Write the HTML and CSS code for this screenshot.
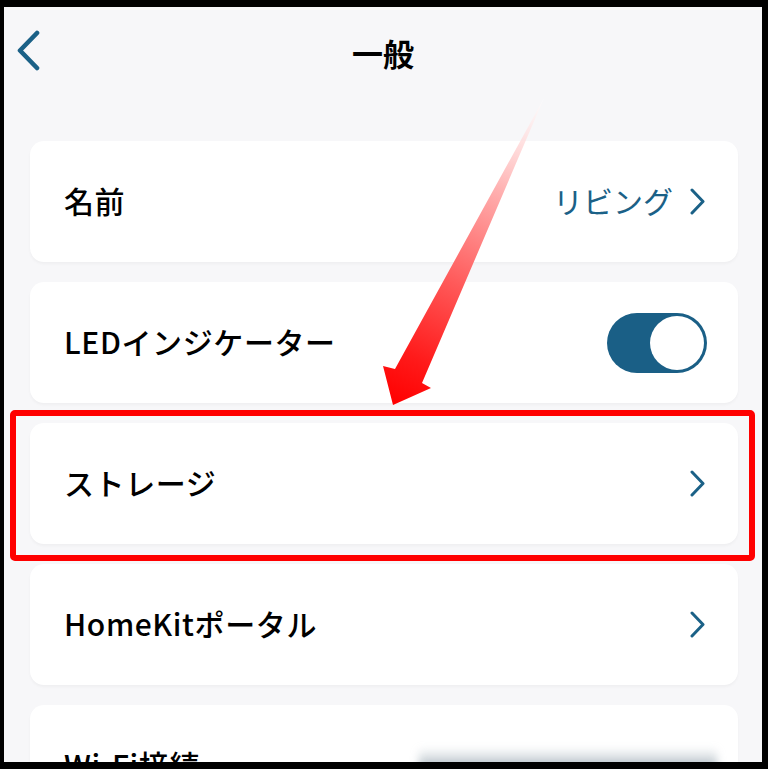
FILE: index.html
```html
<!DOCTYPE html>
<html lang="ja">
<head>
<meta charset="utf-8">
<title>一般</title>
<link rel="stylesheet" href="styles.css">
</head>
<body>
<div class="frame">
  <div class="screen">
    <header class="header">
      <svg class="back" width="26" height="41" viewBox="0 0 26 41">
        <polyline points="21,3 4,20.5 21,38" fill="none" stroke="#1b6187" stroke-width="4.6" stroke-linecap="round" stroke-linejoin="round"/>
      </svg>
      <h1 class="title">一般</h1>
    </header>
    <main class="list">
      <div class="card">
        <span class="label">名前</span>
        <span class="value">リビング</span>
        <svg class="chev" width="17" height="27" viewBox="0 0 17 27"><polyline points="3,2 14,13.5 3,25" fill="none" stroke="#1b6187" stroke-width="3" stroke-linecap="round" stroke-linejoin="round"/></svg>
      </div>
      <div class="card">
        <span class="label">LEDインジケーター</span>
        <div class="toggle"><div class="knob"></div></div>
      </div>
      <div class="card">
        <span class="label">ストレージ</span>
        <svg class="chev" width="17" height="27" viewBox="0 0 17 27"><polyline points="3,2 14,13.5 3,25" fill="none" stroke="#1b6187" stroke-width="3" stroke-linecap="round" stroke-linejoin="round"/></svg>
      </div>
      <div class="card">
        <span class="label">HomeKitポータル</span>
        <svg class="chev" width="17" height="27" viewBox="0 0 17 27"><polyline points="3,2 14,13.5 3,25" fill="none" stroke="#1b6187" stroke-width="3" stroke-linecap="round" stroke-linejoin="round"/></svg>
      </div>
      <div class="card">
        <span class="label">Wi-Fi接続</span>
        <div class="blurred"></div>
      </div>
    </main>
    <div class="highlight"></div>
    <svg class="arrow" viewBox="4 7 758 755" width="758" height="755">
      <defs>
        <linearGradient id="ag" gradientUnits="userSpaceOnUse" x1="544" y1="98" x2="393" y2="405">
          <stop offset="0" stop-color="#ffffff" stop-opacity="0.6"/>
          <stop offset="0.3" stop-color="#ffb0b0"/>
          <stop offset="0.6" stop-color="#ff5a5a"/>
          <stop offset="0.85" stop-color="#ff1a1a"/>
          <stop offset="1" stop-color="#ff0000"/>
        </linearGradient>
      </defs>
      <polygon points="544,98 422,383 431,388 393,405 383,366 395,369" fill="url(#ag)"/>
    </svg>
  </div>
</div>
</body>
</html>
```
FILE: styles.css
```css
* { box-sizing: border-box; }
html, body { margin: 0; padding: 0; background: #000; }
body { font-family: "Noto Sans CJK JP", "Noto Sans", sans-serif; }

.frame {
  width: 768px;
  height: 769px;
  padding: 7px 6px 7px 4px;
  background: #000;
}

.screen {
  position: relative;
  width: 758px;
  height: 755px;
  background: #f7f7f9;
  overflow: hidden;
}

.header {
  position: relative;
  height: 90px;
  display: flex;
  align-items: center;
  justify-content: center;
}

.back {
  position: absolute;
  left: 12px;
  top: 23px;
}

.title {
  margin: 0;
  font-size: 31px;
  font-weight: 700;
  color: #000;
  line-height: 1;
}

.list {
  margin-top: 44px;
  padding: 0 24px 0 26px;
  display: flex;
  flex-direction: column;
  gap: 20px;
}

.card {
  flex: none;
  height: 121px;
  background: #fff;
  border-radius: 14px;
  box-shadow: 0 2px 3px rgba(0, 0, 0, 0.035);
  display: flex;
  align-items: center;
  padding: 0 31px 0 34px;
}

.label {
  font-size: 30px;
  font-weight: 500;
  color: #000;
  letter-spacing: 0.6px;
  line-height: 1.2;
  margin-bottom: 4px;
}

.value {
  margin-left: auto;
  font-size: 30px;
  font-weight: 400;
  color: #1b6187;
  margin-right: 16px;
  line-height: 1.2;
  margin-bottom: 4px;
}

.chev { margin-left: auto; flex: none; margin-right: 1px; }
.value + .chev { margin-left: 0; }

.toggle {
  margin-left: auto;
  width: 100px;
  height: 60px;
  border-radius: 30px;
  background: #1a5f86;
  display: flex;
  align-items: center;
  justify-content: flex-end;
  padding-right: 3px;
}

.knob {
  width: 54px;
  height: 54px;
  border-radius: 50%;
  background: #fff;
}

.blurred {
  margin-left: auto;
  margin-right: -10px;
  width: 298px;
  height: 60px;
  background:
    linear-gradient(to bottom, rgba(255,255,255,0) 0%, rgba(255,255,255,0) 20%, rgba(150,165,175,0.55) 45%, rgba(110,125,140,0.75) 60%, rgba(200,205,210,0.5) 100%);
  filter: blur(4px);
}

.highlight {
  position: absolute;
  left: 6px;
  top: 403px;
  width: 745px;
  height: 151px;
  border: 6px solid #ff0000;
  border-radius: 5px;
}

.arrow {
  position: absolute;
  left: 0;
  top: 0;
  pointer-events: none;
}
```
